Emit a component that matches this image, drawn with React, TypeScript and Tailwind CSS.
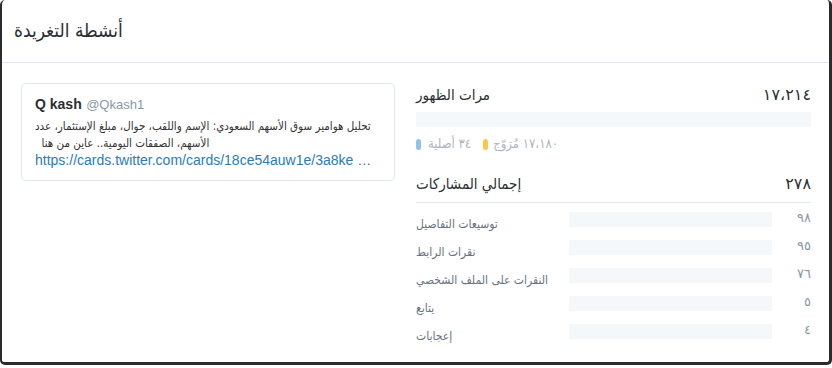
import React from "react";

const rows = [
  { label: "توسيعات التفاصيل", value: "٩٨" },
  { label: "نقرات الرابط", value: "٩٥" },
  { label: "النقرات على الملف الشخصي", value: "٧٦" },
  { label: "يتابع", value: "٥" },
  { label: "إعجابات", value: "٤" },
];

const AR = '"DejaVu Sans Condensed", "Liberation Sans", "DejaVu Sans", sans-serif';

const A = ({ children, className = "" }: { children: React.ReactNode; className?: string }) => (
  <span dir="rtl" className={className} style={{ fontFamily: AR }}>
    {children}
  </span>
);

export default function App() {
  return (
    <div
      className="w-[832px] h-[368px] bg-white overflow-hidden"
      style={{ fontFamily: '"Liberation Sans", "DejaVu Sans", Arial, sans-serif' }}
    >
      <div className="h-[365px] flex flex-col border-l-2 border-r-[3px] border-b-[3px] border-[#2b2b2b] rounded-[5px] border-t-0">
        <div className="h-[63px] shrink-0 border-b border-[#e1e8ed] flex items-center pl-[12px] pb-[2px] text-[19px] text-[#292f33]">
          <A>أنشطة التغريدة</A>
        </div>
        <div className="flex pt-[20px] pl-[19px] pr-[18px]">
          <div className="w-[374px] h-[98px] shrink-0 border border-[#e1e8ed] rounded-[5px] px-[13px] pt-[10px]">
            <div className="leading-[20px] whitespace-nowrap">
              <span className="text-[14px] font-bold text-[#292f33]">Q kash</span>{" "}
              <span className="text-[13px] text-[#8899a6]">@Qkash1</span>
            </div>
            <div className="mt-[3px] text-[11.5px] leading-[17px] text-[#333]">
              <A>{"تحليل هوامير سوق الأسهم السعودي: الإسم واللقب، جوال، مبلغ الإستثمار، عدد الأسهم، الصفقات اليومية.. عاين من هنا\u00A0\u00A0\u200F"}</A>
            </div>
            <div className="text-[14px] leading-[17px] text-[#2b7bb9] whitespace-nowrap">
              https://cards.twitter.com/cards/18ce54auw1e/3a8ke …
            </div>
          </div>
          <div className="ml-[21px] flex-1 flex flex-col">
            <div className="flex justify-between h-[24px] leading-[24px] text-[15px] text-[#292f33]">
              <A>مرات الظهور</A>
              <span className="text-[16px]">١٧،٢١٤</span>
            </div>
            <div className="mt-[5px] h-[15px] bg-[#f5f8fa]" />
            <div className="mt-[9px] h-[16px] flex items-center text-[13px] leading-[16px] text-[#aab8c2]">
              <span className="w-[5px] h-[11px] rounded-full bg-[#8ec3ea]" />
              <A className="ml-[7px]">٣٤ أصلية</A>
              <span className="ml-[12px] w-[5px] h-[11px] rounded-full bg-[#f9c74f]" />
              <A className="ml-[5px]">١٧،١٨٠ مُرَوّج</A>
            </div>
            <div className="mt-[20px] flex justify-between h-[24px] leading-[24px] text-[15px] text-[#292f33]">
              <A>إجمالي المشاركات</A>
              <span className="text-[16px]">٢٧٨</span>
            </div>
            <div className="mt-[6px] border-t border-[#e1e8ed]" />
            <div className="mt-[9px] flex flex-col">
              {rows.map((r) => (
                <div key={r.value} className="flex h-[28px] items-start">
                  <div className="w-[153px] shrink-0 pt-[4px] text-[12px] leading-[16px] text-[#66757f] whitespace-nowrap">
                    <A>{r.label}</A>
                  </div>
                  <div className="w-[203px] h-[15px] shrink-0 bg-[#f5f8fa]" />
                  <div className="flex-1 text-right text-[13px] leading-[16px] text-[#8899a6] -mt-[2px]">
                    {r.value}
                  </div>
                </div>
              ))}
            </div>
          </div>
        </div>
      </div>
    </div>
  );
}
